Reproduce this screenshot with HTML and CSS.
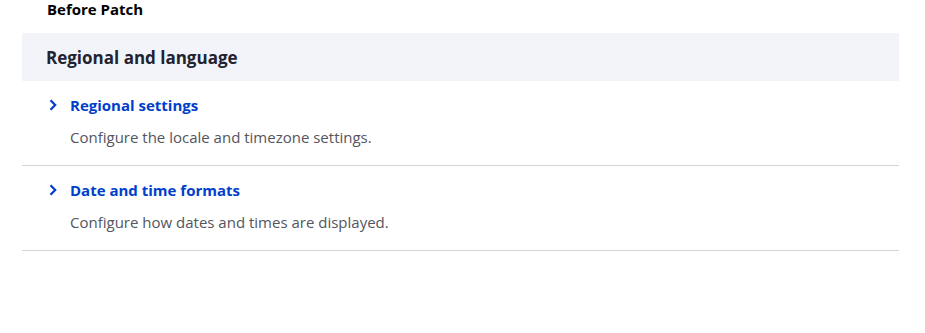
FILE: index.html
```html
<!DOCTYPE html>
<html lang="en">
<head>
<meta charset="utf-8">
<title>Before Patch</title>
<link rel="stylesheet" href="styles.css">
</head>
<body>
<div class="page">
  <h4 class="caption">Before Patch</h4>
  <div class="panel">
    <h3 class="panel-title">Regional and language</h3>
    <ul class="admin-list">
      <li class="admin-item">
        <a class="admin-link" href="#">
          <svg class="chev" width="8" height="12" viewBox="0 0 8 12"><path d="M1.5 1.2 L6.2 6 L1.5 10.8" fill="none" stroke="#003ecc" stroke-width="2.2"/></svg>
          <span>Regional settings</span>
        </a>
        <div class="admin-desc">Configure the locale and timezone settings.</div>
      </li>
      <li class="admin-item">
        <a class="admin-link" href="#">
          <svg class="chev" width="8" height="12" viewBox="0 0 8 12"><path d="M1.5 1.2 L6.2 6 L1.5 10.8" fill="none" stroke="#003ecc" stroke-width="2.2"/></svg>
          <span>Date and time formats</span>
        </a>
        <div class="admin-desc">Configure how dates and times are displayed.</div>
      </li>
    </ul>
  </div>
</div>
</body>
</html>
```

FILE: styles.css
```css
html, body {
  margin: 0;
  padding: 0;
  background: #ffffff;
}
body {
  font-family: "Open Sans", "Noto Sans", sans-serif;
  color: #222330;
}
.page {
  padding: 0 26px 0 22px;
}
.caption {
  margin: 0;
  padding: 0 0 0 25px;
  height: 33px;
  font-size: 15px;
  line-height: 19px;
  font-weight: 700;
  color: #000;
}
.panel-title {
  margin: 0;
  background: #f3f4f9;
  height: 48px;
  padding: 0 24px;
  font-size: 17px;
  line-height: 49px;
  font-weight: 700;
  color: #222330;
}
.admin-list {
  list-style: none;
  margin: 0;
  padding: 0;
}
.admin-item {
  border-bottom: 1px solid #d3d4d9;
  padding: 12px 0 0 0;
  height: 72px;
}
.admin-link {
  display: flex;
  align-items: center;
  gap: 13px;
  padding-left: 27px;
  font-size: 15px;
  line-height: 24px;
  font-weight: 700;
  color: #003ecc;
  text-decoration: none;
}
.admin-desc {
  margin-top: 8px;
  padding-left: 48px;
  font-size: 15px;
  line-height: 24px;
  color: #545560;
}
```
